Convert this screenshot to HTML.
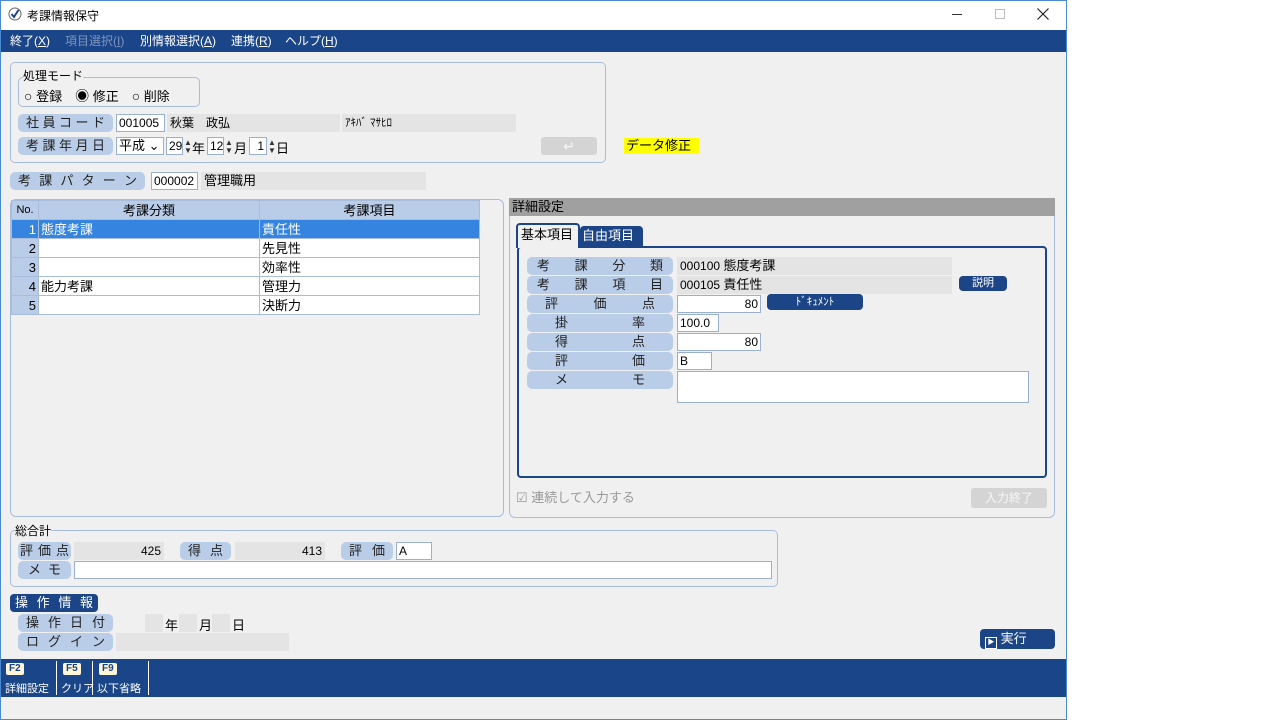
<!DOCTYPE html>
<html><head><meta charset="utf-8"><style>
*{box-sizing:border-box;margin:0;padding:0}
body{width:1280px;height:720px;background:#fff;font-family:"Liberation Sans","Noto Sans CJK JP",sans-serif;font-size:12px;color:#000;position:relative;overflow:hidden}
.a{position:absolute}
#win{left:0;top:0;width:1067px;height:720px;background:#f0f0f0}
#wb{left:0;top:0;width:1067px;height:720px;border:1px solid #4a8ad0;pointer-events:none}
.lb{position:absolute;background:#b9cde8;border-radius:5px;height:18px;line-height:18px;font-size:13px;display:flex;justify-content:space-between;padding:0 8px;color:#222}
.in{position:absolute;background:#fff;border:1px solid #9ab0d0;height:18px;line-height:16px;font-size:12px;padding:0 2px}
.gr{position:absolute;background:#e4e4e4;height:18px;line-height:18px;font-size:12px;padding:0 3px}
.grp{position:absolute;border:1px solid #a8bddc;border-radius:5px}
.db{position:absolute;background:#1c4587;color:#fff;border-radius:4px;text-align:center}
td,th{border:1px solid #a8bddc;height:19px;line-height:17px;font-size:13px;font-weight:normal;padding:0 2px}
.sp{position:absolute;font-size:8px;line-height:8px;color:#333}
.fk{position:absolute;top:4px;background:#fff6d8;color:#1a4589;font-size:10px;font-weight:bold;padding:0 3px;border-radius:2px;line-height:12px}
</style></head><body>
<div id="win" class="a">
<div class="a" style="left:0;top:0;width:1066px;height:30px;background:#fff">
 <svg class="a" style="left:8px;top:7px" width="14" height="14"><circle cx="7" cy="7" r="6" fill="none" stroke="#666"/><path d="M3.5 7 L6 10 L10.5 3" stroke="#1c4587" stroke-width="2" fill="none"/></svg>
 <span class="a" style="left:27px;top:7px;font-size:12px">考課情報保守</span>
 <div class="a" style="left:952px;top:14px;width:10px;height:1px;background:#333"></div>
 <div class="a" style="left:995px;top:9px;width:10px;height:10px;border:1px solid #bbb"></div>
 <svg class="a" style="left:1037px;top:8px" width="12" height="12"><path d="M0.5 0.5 L11.5 11.5 M11.5 0.5 L0.5 11.5" stroke="#222" stroke-width="1.2"/></svg>
</div>
<div class="a" style="left:0;top:30px;width:1066px;height:22px;background:#1a4589;color:#fff;font-size:12px;line-height:22px">
 <span class="a" style="left:10px">終了(<u>X</u>)</span>
 <span class="a" style="left:65px;color:#7f95bd">項目選択(<u>I</u>)</span>
 <span class="a" style="left:140px">別情報選択(<u>A</u>)</span>
 <span class="a" style="left:231px">連携(<u>R</u>)</span>
 <span class="a" style="left:285px">ヘルプ(<u>H</u>)</span>
</div>

<div class="grp" style="left:10px;top:62px;width:596px;height:101px"></div>
<div class="grp" style="left:18px;top:77px;width:182px;height:30px"></div>
<span class="a" style="left:23px;top:67px;background:#f0f0f0;font-size:12px">処理モード</span>
<div class="a" style="left:24px;top:86px;font-size:13px;white-space:pre"><span style="font-size:14px">○</span> 登録　<span style="font-size:14px">◉</span> 修正　<span style="font-size:14px">○</span> 削除</div>

<div class="lb" style="left:18px;top:114px;width:95px"><span>社</span><span>員</span><span>コ</span><span>ー</span><span>ド</span></div>
<div class="in" style="left:116px;top:114px;width:49px">001005</div>
<div class="gr" style="left:167px;top:114px;width:173px">秋葉　政弘</div>
<div class="gr" style="left:342px;top:114px;width:174px;font-size:11px">ｱｷﾊﾞ ﾏｻﾋﾛ</div>
<div class="lb" style="left:18px;top:137px;width:95px"><span>考</span><span>課</span><span>年</span><span>月</span><span>日</span></div>
<div class="in" style="left:116px;top:137px;width:48px;font-size:13px">平成 ⌄</div>
<div class="in" style="left:166px;top:137px;width:17px">29</div><span class="sp" style="left:184px;top:139px">▲<br>▼</span>
<span class="a" style="left:192px;top:138px;font-size:13px">年</span>
<div class="in" style="left:207px;top:137px;width:17px">12</div><span class="sp" style="left:225px;top:139px">▲<br>▼</span>
<span class="a" style="left:234px;top:138px;font-size:13px">月</span>
<div class="in" style="left:249px;top:137px;width:18px;text-align:right">1</div><span class="sp" style="left:268px;top:139px">▲<br>▼</span>
<span class="a" style="left:276px;top:138px;font-size:13px">日</span>
<div class="a" style="left:541px;top:137px;width:56px;height:18px;background:#d4d4d4;border-radius:3px;color:#f4f4f4;text-align:center;font-size:14px;line-height:18px">↵</div>
<div class="a" style="left:624px;top:138px;width:75px;height:16px;background:#ffff00;font-size:13px;line-height:16px;padding-left:2px">データ修正</div>

<div class="lb" style="left:10px;top:172px;width:135px"><span>考</span><span>課</span><span>パ</span><span>タ</span><span>ー</span><span>ン</span></div>
<div class="in" style="left:151px;top:172px;width:47px">000002</div>
<div class="gr" style="left:201px;top:172px;width:225px;font-size:13px">管理職用</div>

<div class="grp" style="left:10px;top:199px;width:494px;height:318px;border-radius:6px"></div>
<table class="a" style="left:11px;top:200px;width:469px;border-collapse:collapse;background:#fff">
<tr style="background:#b9cde8"><th style="width:27px;font-size:11px">No.</th><th style="width:221px">考課分類</th><th>考課項目</th></tr>
<tr style="background:#3584e0;color:#fff"><td style="text-align:right">1</td><td>態度考課</td><td>責任性</td></tr>
<tr><td style="text-align:right;background:#b9cde8">2</td><td></td><td>先見性</td></tr>
<tr><td style="text-align:right;background:#b9cde8">3</td><td></td><td>効率性</td></tr>
<tr><td style="text-align:right;background:#b9cde8">4</td><td>能力考課</td><td>管理力</td></tr>
<tr><td style="text-align:right;background:#b9cde8">5</td><td></td><td>決断力</td></tr>
</table>

<div class="grp" style="left:509px;top:198px;width:546px;height:320px;border-radius:6px"></div>
<div class="a" style="left:509px;top:198px;width:546px;height:18px;background:#a0a0a0;font-size:13px;line-height:18px;padding-left:3px">詳細設定</div>
<div class="a" style="left:517px;top:246px;width:530px;height:232px;border:2px solid #1c4587;border-radius:4px"></div>
<div class="a" style="left:516px;top:223px;width:64px;height:25px;background:#f0f0f0;border:2px solid #1c4587;border-bottom:none;border-radius:4px 4px 0 0;font-size:13px;line-height:20px;padding-left:3px">基本項目</div>
<div class="db" style="left:580px;top:226px;width:63px;height:20px;border-radius:4px 4px 0 0;font-size:13px;line-height:20px;text-align:left;padding-left:2px">自由項目</div>

<div class="lb" style="left:527px;top:257px;width:146px;padding:0 10px"><span>考</span><span>課</span><span>分</span><span>類</span></div>
<div class="gr" style="left:677px;top:257px;width:275px">000100 <span style="font-size:13px">態度考課</span></div>
<div class="lb" style="left:527px;top:276px;width:146px;padding:0 10px"><span>考</span><span>課</span><span>項</span><span>目</span></div>
<div class="gr" style="left:677px;top:276px;width:275px">000105 <span style="font-size:13px">責任性</span></div>
<div class="db" style="left:959px;top:276px;width:48px;height:15px;font-size:11px;line-height:15px">説明</div>
<div class="lb" style="left:527px;top:295px;width:146px;padding:0 18px"><span>評</span><span>価</span><span>点</span></div>
<div class="in" style="left:677px;top:295px;width:84px;text-align:right">80</div>
<div class="db" style="left:767px;top:294px;width:96px;height:16px;font-size:11px;line-height:16px">ﾄﾞｷｭﾒﾝﾄ</div>
<div class="lb" style="left:527px;top:314px;width:146px;padding:0 28px"><span>掛</span><span>率</span></div>
<div class="in" style="left:677px;top:314px;width:42px">100.0</div>
<div class="lb" style="left:527px;top:333px;width:146px;padding:0 28px"><span>得</span><span>点</span></div>
<div class="in" style="left:677px;top:333px;width:84px;text-align:right">80</div>
<div class="lb" style="left:527px;top:352px;width:146px;padding:0 28px"><span>評</span><span>価</span></div>
<div class="in" style="left:677px;top:352px;width:35px">B</div>
<div class="lb" style="left:527px;top:371px;width:146px;padding:0 28px"><span>メ</span><span>モ</span></div>
<div class="in" style="left:677px;top:371px;width:352px;height:32px"></div>
<div class="a" style="left:516px;top:487px;color:#999;font-size:13px">☑ 連続して入力する</div>
<div class="a" style="left:971px;top:488px;width:76px;height:20px;background:#d4d4d4;border-radius:3px;color:#f6f6f6;font-size:12px;line-height:20px;text-align:center">入力終了</div>

<div class="grp" style="left:10px;top:530px;width:768px;height:57px"></div>
<span class="a" style="left:15px;top:522px;background:#f0f0f0;font-size:12px">総合計</span>
<div class="lb" style="left:18px;top:542px;width:53px;padding:0 2px"><span>評</span><span>価</span><span>点</span></div>
<div class="gr" style="left:74px;top:542px;width:90px;text-align:right">425</div>
<div class="lb" style="left:180px;top:542px;width:51px"><span>得</span><span>点</span></div>
<div class="gr" style="left:235px;top:542px;width:90px;text-align:right">413</div>
<div class="lb" style="left:341px;top:542px;width:52px"><span>評</span><span>価</span></div>
<div class="in" style="left:396px;top:542px;width:36px">A</div>
<div class="lb" style="left:18px;top:561px;width:53px;padding:0 10px"><span>メ</span><span>モ</span></div>
<div class="in" style="left:74px;top:561px;width:698px"></div>

<div class="db" style="left:10px;top:594px;width:88px;height:18px;font-size:13px;line-height:18px;display:flex;justify-content:space-between;padding:0 5px"><span>操</span><span>作</span><span>情</span><span>報</span></div>
<div class="lb" style="left:18px;top:614px;width:95px"><span>操</span><span>作</span><span>日</span><span>付</span></div>
<div class="gr" style="left:145px;top:614px;width:18px"></div><span class="a" style="left:165px;top:615px;font-size:13px">年</span>
<div class="gr" style="left:179px;top:614px;width:18px"></div><span class="a" style="left:199px;top:615px;font-size:13px">月</span>
<div class="gr" style="left:212px;top:614px;width:18px"></div><span class="a" style="left:232px;top:615px;font-size:13px">日</span>
<div class="lb" style="left:18px;top:633px;width:95px"><span>ロ</span><span>グ</span><span>イ</span><span>ン</span></div>
<div class="gr" style="left:116px;top:633px;width:173px"></div>
<div class="db" style="left:980px;top:629px;width:75px;height:20px;font-size:13px;line-height:20px;text-align:left;padding-left:5px"><span style="display:inline-block;width:12px;height:12px;border:1.5px solid #fff;font-size:7px;line-height:9px;text-align:center;vertical-align:-1px">▶</span> 実行</div>

<div class="a" style="left:0;top:659px;width:1066px;height:38px;background:#1a4589;color:#fff;font-size:11px">
 <div class="fk" style="left:6px">F2</div>
 <span class="a" style="left:5px;top:21px">詳細設定</span>
 <div class="a" style="left:56px;top:2px;width:1px;height:34px;background:#fff"></div>
 <div class="fk" style="left:63px">F5</div>
 <span class="a" style="left:61px;top:21px">クリア</span>
 <div class="a" style="left:92px;top:2px;width:1px;height:34px;background:#fff"></div>
 <div class="fk" style="left:99px">F9</div>
 <span class="a" style="left:97px;top:21px">以下省略</span>
 <div class="a" style="left:148px;top:2px;width:1px;height:34px;background:#fff"></div>
</div>
<div id="wb" class="a"></div>
</div>
</body></html>
